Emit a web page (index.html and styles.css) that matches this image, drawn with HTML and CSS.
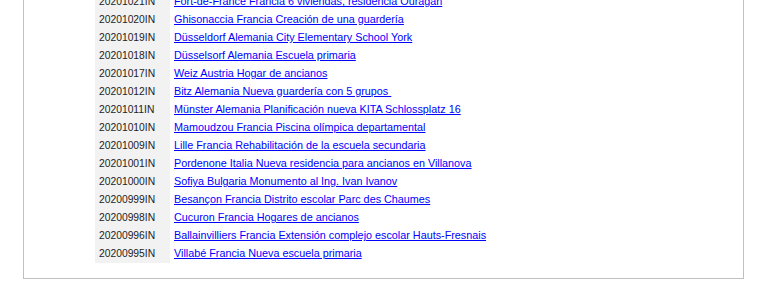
FILE: index.html
```html
<!DOCTYPE html>
<html lang="es">
<head>
<meta charset="utf-8">
<title>Proyectos</title>
<link rel="stylesheet" href="styles.css">
</head>
<body>
<div class="page">
  <div class="box">
    <div class="list">
      <div class="code">20201021IN</div><div class="title"><a href="#">Fort-de-France Francia 6 viviendas, residencia Ouragan</a></div>
      <div class="code">20201020IN</div><div class="title"><a href="#">Ghisonaccia Francia Creación de una guardería</a></div>
      <div class="code">20201019IN</div><div class="title"><a href="#">Düsseldorf Alemania City Elementary School York</a></div>
      <div class="code">20201018IN</div><div class="title"><a href="#">Düsselsorf Alemania Escuela primaria</a></div>
      <div class="code">20201017IN</div><div class="title"><a href="#">Weiz Austria Hogar de ancianos</a></div>
      <div class="code">20201012IN</div><div class="title"><a href="#">Bitz Alemania Nueva guardería con 5 grupos&nbsp;</a></div>
      <div class="code">20201011IN</div><div class="title"><a href="#">Münster Alemania Planificación nueva KITA Schlossplatz 16</a></div>
      <div class="code">20201010IN</div><div class="title"><a href="#">Mamoudzou Francia Piscina olímpica departamental</a></div>
      <div class="code">20201009IN</div><div class="title"><a href="#">Lille Francia Rehabilitación de la escuela secundaria</a></div>
      <div class="code">20201001IN</div><div class="title"><a href="#">Pordenone Italia Nueva residencia para ancianos en Villanova</a></div>
      <div class="code">20201000IN</div><div class="title"><a href="#">Sofiya Bulgaria Monumento al Ing. Ivan Ivanov</a></div>
      <div class="code">20200999IN</div><div class="title"><a href="#">Besançon Francia Distrito escolar Parc des Chaumes</a></div>
      <div class="code">20200998IN</div><div class="title"><a href="#">Cucuron Francia Hogares de ancianos</a></div>
      <div class="code">20200996IN</div><div class="title"><a href="#">Ballainvilliers Francia Extensión complejo escolar Hauts-Fresnais</a></div>
      <div class="code">20200995IN</div><div class="title"><a href="#">Villabé Francia Nueva escuela primaria</a></div>
    </div>
  </div>
</div>
</body>
</html>
```

FILE: styles.css
```css
html, body {
  margin: 0;
  padding: 0;
  background: #ffffff;
  overflow: hidden;
}

body {
  font-family: "Liberation Sans", Arial, sans-serif;
  font-size: 11px;
  color: #222222;
}

.page {
  padding-left: 23px;
  margin-top: -8px;
}

.box {
  width: 721px;
  border: 1px solid #c0c0c0;
  padding: 0 0 15px 71px;
  box-sizing: border-box;
}

.list {
  display: grid;
  grid-template-columns: 75px 1fr;
  grid-auto-rows: 18px;
}

.code {
  background: #f2f2f2;
  padding: 0 4px 2px;
  display: flex;
  align-items: center;
  white-space: nowrap;
  font-size: 10.3px;
  color: #222222;
}

.title {
  padding: 0 0 2px 4px;
  display: flex;
  align-items: center;
  white-space: nowrap;
  font-size: 10.8px;
}

.title a {
  color: #0000ff;
  text-decoration: underline;
}
```
